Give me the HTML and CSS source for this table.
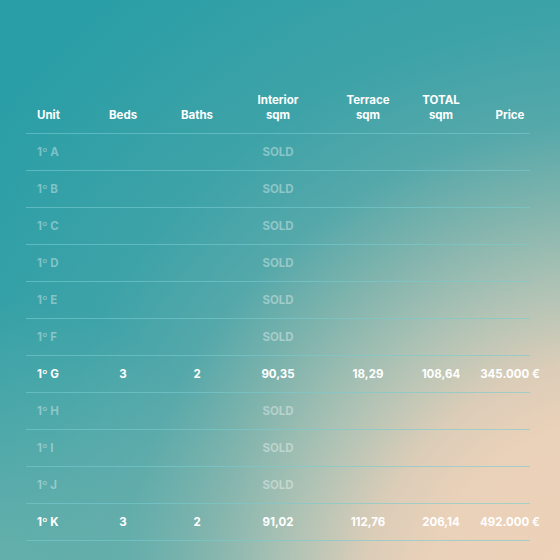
FILE: index.html
```html
<!DOCTYPE html>
<html lang="en">

<head>
    <meta charset="UTF-8">
    <meta name="viewport" content="width=device-width, initial-scale=1.0">
    <title>Availability</title>
    <link rel="stylesheet" href="styles.css">
</head>

<body>
    <div class="page">
        <div class="units">
            <div class="row head">
                <div class="cell unit">Unit</div>
                <div class="cell">Beds</div>
                <div class="cell">Baths</div>
                <div class="cell">Interior<br>sqm</div>
                <div class="cell">Terrace<br>sqm</div>
                <div class="cell">TOTAL<br>sqm</div>
                <div class="cell price">Price</div>
            </div>
            <div class="row sold">
                <div class="cell unit">1º A</div>
                <div class="cell"></div>
                <div class="cell"></div>
                <div class="cell">SOLD</div>
                <div class="cell"></div>
                <div class="cell"></div>
                <div class="cell price"></div>
            </div>
            <div class="row sold">
                <div class="cell unit">1º B</div>
                <div class="cell"></div>
                <div class="cell"></div>
                <div class="cell">SOLD</div>
                <div class="cell"></div>
                <div class="cell"></div>
                <div class="cell price"></div>
            </div>
            <div class="row sold">
                <div class="cell unit">1º C</div>
                <div class="cell"></div>
                <div class="cell"></div>
                <div class="cell">SOLD</div>
                <div class="cell"></div>
                <div class="cell"></div>
                <div class="cell price"></div>
            </div>
            <div class="row sold">
                <div class="cell unit">1º D</div>
                <div class="cell"></div>
                <div class="cell"></div>
                <div class="cell">SOLD</div>
                <div class="cell"></div>
                <div class="cell"></div>
                <div class="cell price"></div>
            </div>
            <div class="row sold">
                <div class="cell unit">1º E</div>
                <div class="cell"></div>
                <div class="cell"></div>
                <div class="cell">SOLD</div>
                <div class="cell"></div>
                <div class="cell"></div>
                <div class="cell price"></div>
            </div>
            <div class="row sold">
                <div class="cell unit">1º F</div>
                <div class="cell"></div>
                <div class="cell"></div>
                <div class="cell">SOLD</div>
                <div class="cell"></div>
                <div class="cell"></div>
                <div class="cell price"></div>
            </div>
            <div class="row">
                <div class="cell unit">1º G</div>
                <div class="cell">3</div>
                <div class="cell">2</div>
                <div class="cell">90,35</div>
                <div class="cell">18,29</div>
                <div class="cell">108,64</div>
                <div class="cell price">345.000 €</div>
            </div>
            <div class="row sold">
                <div class="cell unit">1º H</div>
                <div class="cell"></div>
                <div class="cell"></div>
                <div class="cell">SOLD</div>
                <div class="cell"></div>
                <div class="cell"></div>
                <div class="cell price"></div>
            </div>
            <div class="row sold">
                <div class="cell unit">1º I</div>
                <div class="cell"></div>
                <div class="cell"></div>
                <div class="cell">SOLD</div>
                <div class="cell"></div>
                <div class="cell"></div>
                <div class="cell price"></div>
            </div>
            <div class="row sold">
                <div class="cell unit">1º J</div>
                <div class="cell"></div>
                <div class="cell"></div>
                <div class="cell">SOLD</div>
                <div class="cell"></div>
                <div class="cell"></div>
                <div class="cell price"></div>
            </div>
            <div class="row">
                <div class="cell unit">1º K</div>
                <div class="cell">3</div>
                <div class="cell">2</div>
                <div class="cell">91,02</div>
                <div class="cell">112,76</div>
                <div class="cell">206,14</div>
                <div class="cell price">492.000 €</div>
            </div>
        </div>
    </div>
</body>
</html>
```

FILE: styles.css
```css
body {
    margin: 0;
    font-family: Inter, "Open Sans", sans-serif;
    font-weight: 700;
    color: #fff;
}
.page {
    width: 560px;
    height: 560px;
    padding: 93px 0 0 26px;
    box-sizing: border-box;
    overflow: hidden;
    background:
        radial-gradient(circle at 0% 100%, rgba(150, 192, 176, 0.45), rgba(150, 192, 176, 0) 260px),
        radial-gradient(circle at 620px 620px, #efd2b8 0px, #ead1b9 200px, #dccdb8 260px, #b0c3b5 335px, #80b4ad 420px, #55a8aa 500px, #3ea3a8 600px, #2a9ea6 800px);
}
.units {
    width: 504px;
}
.row {
    display: grid;
    grid-template-columns: 60px 74px 74px 88px 92px 54px 62px;
    height: 37px;
    padding-bottom: 1px;
    box-sizing: border-box;
    border-bottom: 1px solid rgba(120, 204, 208, 0.6);
    font-size: 11.5px;
}
.row.head {
    height: auto;
    padding-bottom: 10px;
    line-height: 15px;
}
.cell {
    display: flex;
    align-items: center;
    justify-content: center;
    text-align: center;
    white-space: nowrap;
}
.head .cell {
    align-items: flex-end;
}
.cell.unit {
    justify-content: flex-start;
    padding-left: 11px;
}
.cell.price {
    padding-left: 22px;
}
.sold {
    color: rgba(255, 255, 255, 0.38);
}
```
